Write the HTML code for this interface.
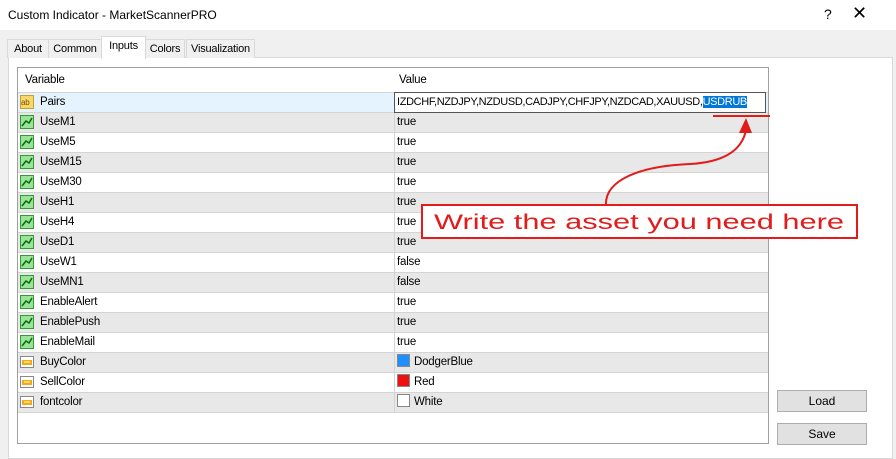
<!DOCTYPE html>
<html><head><style>
body{margin:0;width:896px;height:447px;background:#f0f0f0;font-family:"Liberation Sans",sans-serif;font-size:12px;position:relative;overflow:hidden;color:#000}
.abs{position:absolute}
.title{left:0;top:0;width:896px;height:30px;background:#fff}
.tab{top:39px;height:18px;border:1px solid #d9d9d9;border-bottom:none;background:#f0f0f0;line-height:18px;text-align:center;font-size:11px;letter-spacing:-0.2px}
.panel{left:8px;top:57px;width:883px;height:400px;background:#fff;border:1px solid #d9d9d9}
.grid{left:17px;top:67px;width:750px;height:375px;border:1px solid #a0a0a0;background:#fff}
.row{position:absolute;left:0;width:750px;height:19px;border-bottom:1px solid #d4d4d4;line-height:19px;font-size:11.5px;letter-spacing:-0.2px}
.row .n{position:absolute;left:22px}
.row .v{position:absolute;left:376px;border-left:1px solid #d4d4d4;height:20px;top:0;padding-left:2px;width:372px}
.g{background:#e8e8e8}
.ic{position:absolute;left:2px;top:2px;width:14px;height:14px}
.btn{left:777px;width:88px;height:20px;background:#e1e1e1;border:1px solid #adadad;text-align:center;line-height:20px}
.sw{display:inline-block;width:11px;height:11px;vertical-align:-2px;margin-right:4px;border:1px solid #888}
</style></head><body>
<div class="abs title"></div>
<div class="abs" style="left:8px;top:8px;font-size:12px">Custom Indicator - MarketScannerPRO</div>
<div class="abs" style="left:824px;top:6px;font-size:14px">?</div>
<div class="abs" style="left:852px;top:3px;font-size:18px">✕</div>
<div class="abs panel"></div>
<div class="abs tab" style="left:7px;width:40px">About</div>
<div class="abs tab" style="left:48px;width:52px">Common</div>
<div class="abs tab" style="left:101px;top:36px;height:22px;width:43px;background:#fff">Inputs</div>
<div class="abs tab" style="left:145px;width:38px">Colors</div>
<div class="abs tab" style="left:186px;width:67px">Visualization</div>
<div class="abs grid">
<div class="row" style="top:0;height:24px;line-height:24px;border-bottom:1px solid #d4d4d4"><span style="position:absolute;left:7px">Variable</span><span style="position:absolute;left:381px">Value</span></div>
<div class="row" style="top:25px;background:#e5f3ff"><svg class="ic" viewBox="0 0 14 14"><rect x="0.5" y="0.5" width="13" height="13" fill="#f7d86a" stroke="#c8a030"/><text x="1" y="10" font-size="8" fill="#7a5000" font-family="Liberation Sans">ab</text></svg><span class="n">Pairs</span><span class="v" style="background:#fff;border:1px solid #555;top:-1px;height:19px;width:368px;font-size:11px;letter-spacing:-0.35px;overflow:hidden;white-space:nowrap">IZDCHF,NZDJPY,NZDUSD,CADJPY,CHFJPY,NZDCAD,XAUUSD,<span style="background:#0078d7;color:#fff">USDRUB</span></span></div>
</div>
<script>
var r=[["UseM1","true"],["UseM5","true"],["UseM15","true"],["UseM30","true"],["UseH1","true"],["UseH4","true"],["UseD1","true"],["UseW1","false"],["UseMN1","false"],["EnableAlert","true"],["EnablePush","true"],["EnableMail","true"],["BuyColor","DodgerBlue","#1e90ff"],["SellColor","Red","#ee1111"],["fontcolor","White","#fff"]];
var g=document.querySelector('.grid'),h='';
r.forEach(function(x,i){var t=45+i*20;var ic=x[2]?'<svg class="ic" viewBox="0 0 14 14"><rect x="0.5" y="1.5" width="13" height="11" fill="#fff" stroke="#888"/><rect x="2" y="5" width="10" height="5" fill="#f5a623"/><rect x="4" y="6" width="6" height="2" fill="#ffe14d"/></svg>':'<svg class="ic" viewBox="0 0 14 14"><rect x="0.5" y="0.5" width="13" height="13" fill="#9be29b" stroke="#2e9e2e"/><path d="M2 11 L6 6 L9 8 L12 3" stroke="#0a6a0a" stroke-width="1.5" fill="none"/></svg>';
h+='<div class="row'+(i%2==0?' g':'')+'" style="top:'+t+'px">'+ic+'<span class="n">'+x[0]+'</span><span class="v">'+(x[2]?'<span class="sw" style="background:'+x[2]+'"></span>':'')+x[1]+'</span></div>';});
g.insertAdjacentHTML('beforeend',h);
</script>
<div class="abs btn" style="top:390px">Load</div>
<div class="abs btn" style="top:423px">Save</div>
<svg class="abs" style="left:0;top:0" width="896" height="447">
<line x1="713" y1="116" x2="770" y2="116" stroke="#e21b1b" stroke-width="2"/>
<path d="M606 206 C604 180 640 166 690 164 C725 162 742 150 746 130" stroke="#e21b1b" stroke-width="2" fill="none"/>
<path d="M739 133 L746 118 L752 133 Z" fill="#e21b1b"/>
<rect x="422" y="205" width="435" height="33" fill="#fff" stroke="#e21b1b" stroke-width="2"/>
<text x="639" y="229" text-anchor="middle" font-family="Liberation Sans" font-size="21" fill="#e21b1b" textLength="410" lengthAdjust="spacingAndGlyphs">Write the asset you need here</text>
</svg>
</body></html>
